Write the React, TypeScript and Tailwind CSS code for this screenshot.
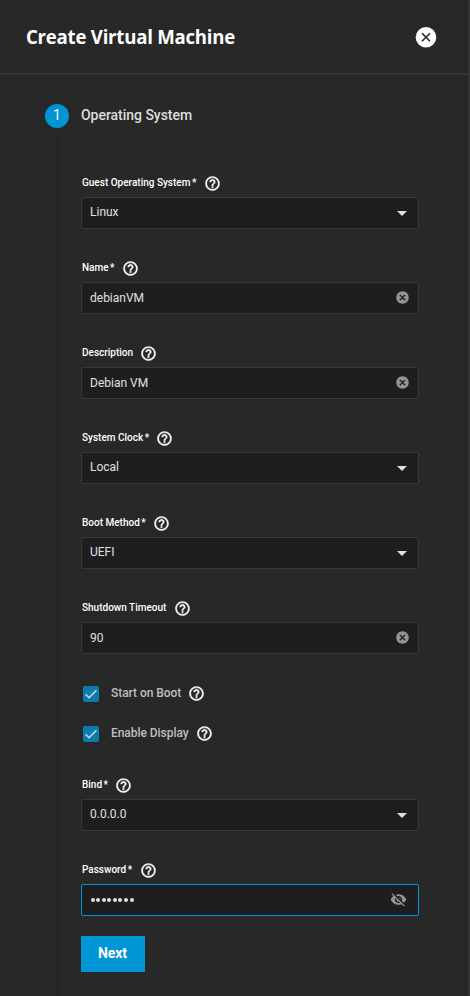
import { MdCancel, MdVisibilityOff } from 'react-icons/md';

function Help() {
  return (
    <svg width="17" height="17" viewBox="0 0 24 24" className="mb-px shrink-0">
      <path
        fill="#fff"
        stroke="#fff"
        strokeWidth="0.5"
        d="M11 18h2v-2h-2v2zm1-16C6.48 2 2 6.48 2 12s4.48 10 10 10 10-4.48 10-10S17.52 2 12 2zm0 18c-4.41 0-8-3.59-8-8s3.59-8 8-8 8 3.59 8 8-3.59 8-8 8zm0-14c-2.21 0-4 1.79-4 4h2c0-1.1.9-2 2-2s2 .9 2 2c0 2-3 1.75-3 5h2c0-2.250 3-2.500 3-5 0-2.210-1.790-4-4-4z"
      />
    </svg>
  );
}

type FieldProps = {
  label: string;
  value: string;
  kind: 'select' | 'text' | 'password';
  required?: boolean;
};

function Field({ label, value, kind, required }: FieldProps) {
  const border = kind === 'password' ? 'border-[#0095d5]' : 'border-[#383838]';
  const lift = kind === 'select' ? 'pb-[3px]' : 'pb-px';
  return (
    <div className="h-[85px]">
      <div className="flex h-[18px] items-center gap-[7.4px] pl-px">
        <span className="mb-[3px] whitespace-nowrap text-[10px] leading-3 font-medium text-white">
          {label}
          {required && <span className="-ml-px"> *</span>}
        </span>
        <Help />
      </div>
      <div className={`mt-1 flex h-8 w-[338px] items-center justify-between rounded-[2px] border bg-[#1e1e1e] pl-2 ${border}`}>
        {kind === 'password' ? (
          <span className="flex gap-[1.6px] pl-[0.5px]">
            {Array.from(value, (_, i) => (
              <span key={i} className="size-1 rounded-full bg-[#e0e0e0]" />
            ))}
          </span>
        ) : (
          <span className={`text-[12px] leading-4 text-[#e0e0e0] ${lift}`}>{value}</span>
        )}
        {kind === 'select' && (
          <svg width="10" height="5" viewBox="0 0 10 5" className="mr-[11px]">
            <path d="M0 0h10L5 5z" fill="#e0e0e0" />
          </svg>
        )}
        {kind === 'text' && <MdCancel size={15} className="mr-2 mb-px text-[#949494]" />}
        {kind === 'password' && <MdVisibilityOff size={17} className="mr-[11px] mb-px text-[#949494]" />}
      </div>
    </div>
  );
}

function Check({ label }: { label: string }) {
  return (
    <div className="flex h-10 items-center pl-[2px]">
      <span className="flex size-4 items-center justify-center rounded-[2px] bg-[#0b7cb0]">
        <svg width="14" height="14" viewBox="0 0 14 14" fill="none">
          <path d="M1.5 7.2 5 10.7 12.5 3.2" stroke="#d0d7da" strokeWidth="1.6" />
        </svg>
      </span>
      <span className="mr-[7px] mb-[2px] ml-3 text-[12px] leading-4 font-medium tracking-[-0.05px] text-[#bebebe]">{label}</span>
      <Help />
    </div>
  );
}

export default function App() {
  return (
    <div className="flex h-[996px] w-[470px] flex-col overflow-hidden border-r-2 border-[#343434] bg-[#282828] font-['Roboto',sans-serif]">
      <header className="flex h-[75px] shrink-0 items-center justify-between border-b-2 border-[#353535] pr-[30px] pl-[26px]">
        <h1 className="origin-left scale-x-[0.93] font-['Open_Sans','Noto_Sans',sans-serif] text-[20px] leading-7 font-bold tracking-[-0.25px] whitespace-nowrap text-white">
          Create Virtual Machine
        </h1>
        <svg width="24" height="24" viewBox="0 0 24 24">
          <circle cx="12" cy="12.3" r="10.3" fill="#fff" />
          <path d="m8 8.300 8 8m0-8-8 8" stroke="#282828" strokeWidth="1.6" />
        </svg>
      </header>
      <main className="flex flex-1">
        <div className="flex w-[81px] shrink-0 flex-col pt-[29px] pl-[45px]">
          <div className="flex size-6 items-center justify-center rounded-full bg-[#0095d5] pb-0.5 text-[14px] leading-none text-white">1</div>
          <div className="mt-2 ml-3 flex-1 border-l border-[#222222]" />
        </div>
        <div className="pt-[30px]">
          <h2 className="h-[70px] text-[14px] leading-5 font-medium tracking-[-0.03px] text-[#dedede]">Operating System</h2>
          <Field label="Guest Operating System" value="Linux" kind="select" required />
          <Field label="Name" value="debianVM" kind="text" required />
          <Field label="Description" value="Debian VM" kind="text" />
          <Field label="System Clock" value="Local" kind="select" required />
          <Field label="Boot Method" value="UEFI" kind="select" required />
          <Field label="Shutdown Timeout" value="90" kind="text" />
          <div className="-mt-[11px] h-[103px]">
            <Check label="Start on Boot" />
            <Check label="Enable Display" />
          </div>
          <Field label="Bind" value="0.0.0.0" kind="select" required />
          <Field label="Password" value="debian12" kind="password" required />
          <button className="-mt-[11px] block h-9 w-16 bg-[#0095d5] pr-px pb-0.5 text-[14px] font-bold tracking-[-0.1px] text-white">Next</button>
        </div>
      </main>
    </div>
  );
}
